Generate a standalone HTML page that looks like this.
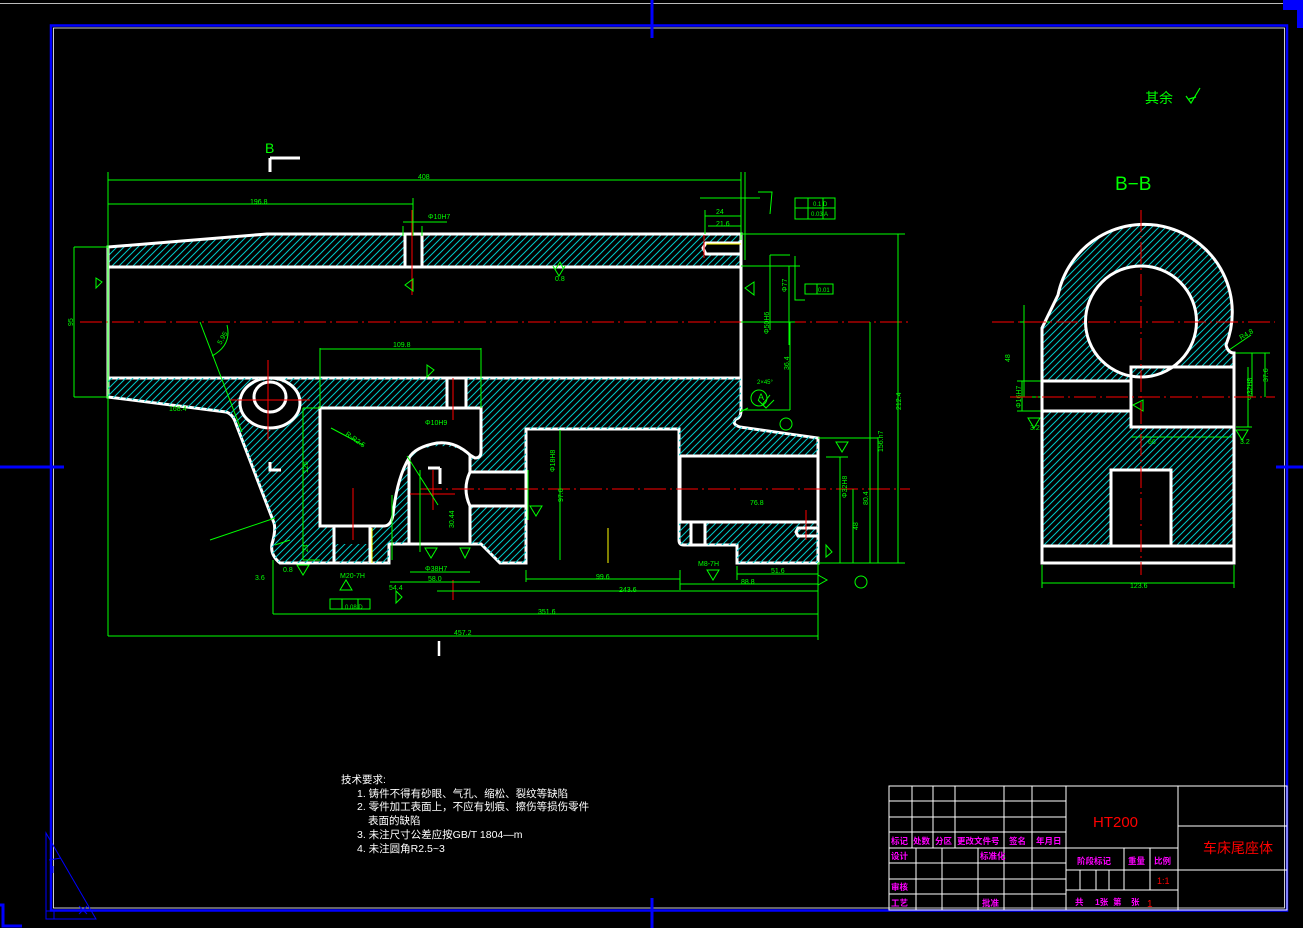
<!DOCTYPE html>
<html><head><meta charset="utf-8"><style>
html,body{margin:0;padding:0;background:#000;width:1303px;height:928px;overflow:hidden}
svg{display:block}
.g{fill:#00ff00;font-family:"Liberation Sans",sans-serif;font-size:7px}
.d{stroke:#00ff00;stroke-width:1;fill:none}
.w{stroke:#fff;stroke-width:3;fill:none}
.r{stroke:#ff0000;stroke-width:1;stroke-dasharray:22 4 2 4;fill:none}
.t{stroke:#fff;stroke-width:1;fill:none}
.m{fill:#ff00ff;font-family:"Liberation Sans","Noto Sans CJK SC",sans-serif;font-size:8.5px;font-weight:bold}
</style></head><body>
<svg width="1303" height="928" viewBox="0 0 1303 928" xmlns="http://www.w3.org/2000/svg">
<defs>
<pattern id="h" width="7" height="7" patternUnits="userSpaceOnUse">
<path d="M-1,8 L8,-1 M-1,1 L1,-1 M6,8 L8,6" stroke="#00c8c8" stroke-width="1"/>
</pattern>
</defs>
<line x1="0" y1="3.5" x2="1290" y2="3.5" stroke="#bbb" stroke-width="1"/>
<path d="M1283,0 H1303 V28 H1297 V10 H1283 Z" fill="#0000ff"/>
<rect x="51" y="25.5" width="1236" height="885" fill="none" stroke="#0000ff" stroke-width="2.5"/>
<rect x="53.5" y="28" width="1231" height="880" fill="none" stroke="#fff" stroke-width="0.8"/>
<line x1="652" y1="0" x2="652" y2="38" stroke="#0000ff" stroke-width="3"/>
<line x1="652" y1="898" x2="652" y2="928" stroke="#0000ff" stroke-width="3"/>
<line x1="0" y1="467" x2="64" y2="467" stroke="#0000ff" stroke-width="3"/>
<line x1="1276" y1="467" x2="1303" y2="467" stroke="#0000ff" stroke-width="3"/>
<path d="M0,905 H3 V926 H22" stroke="#0000ff" stroke-width="3" fill="none"/>
<path d="M46,833 V919 H96 Z M46,911 H54 V919" stroke="#0000ff" stroke-width="1" fill="none"/>
<path d="M49,860 L61,858 M53,866 V873 M79,906 L87,914 M87,906 L79,914" stroke="#0000ff" stroke-width="1" fill="none"/>

<path fill="url(#h)" fill-rule="evenodd" d="M108,247 L267,234 H741 V267 H108 Z M405,234 H422 V267 H405 Z M703,243 H741 V254 H703 Z"/>
<path class="w" d="M108,247 L267,234 H741 V410 Q741,418 736,419 Q731,424 740,427 L818,438 V563 H737 V545 H684 Q679,545 679,540 V429 H526 V563 H500 L481,544 H389 V563 H280 Q270,555 272,544 Q276,530 274,523 L236,424 Q233,414 226,412 L108,397 Z"/>
<path class="w" d="M108,267 H741 M108,378 H741 M405,234 V267 M422,234 V267 M741,243 H706 L703,248 L706,254 H741"/>
<path fill="url(#h)" fill-rule="evenodd" d="M108,378 H741 V410 Q741,418 736,419 Q731,424 740,427 L818,438 V456 H680 V522 H818 V563 H737 V545 H684 Q679,545 679,540 V429 H526 V563 H500 L481,544 H389 V563 H280 Q270,555 272,544 Q276,530 274,523 L236,424 Q233,414 226,412 L108,397 Z
M270,380 A30,25 0 1,0 270.1,380 Z
M320,408 H481 V452 Q481,458 475,458 L470,455 Q455,441 437,443 Q415,447 409,458 V458 Q397,478 393,515 Q391,526 384,526 H320 Z
M409,544 V460 Q420,446 440,446 Q462,446 470,458 V472 H526 V506 H470 V544 Z
M447,378 H466 V408 H447 Z
M334,526 H370 V544 H334 Z
M691,522 H705 V545 H691 Z"/>
<ellipse cx="270" cy="403" rx="30" ry="25" class="w" stroke-width="2.5"/>
<ellipse cx="270" cy="397" rx="16" ry="15" class="w" stroke-width="2.5"/>
<path class="w" d="M320,408 H481 V452 Q481,458 475,458 L470,455 Q455,441 437,443 Q415,447 409,458 Q397,478 393,515 Q391,526 384,526 H320 Z"/>
<path class="w" d="M409,544 V458 M470,455 V472 H526 M470,506 H526 M470,506 V544 M470,472 Q462,489 470,506"/>
<path class="w" d="M447,378 V408 M466,378 V408 M334,526 V563 M370,526 V563 M680,456 H818 M680,456 V522 H818 M691,522 V545 M705,522 V545 M818,528 H798 L796,532 L798,536 H818"/>
<path d="M372,528 V563 M608,528 V563" stroke="#ffff00" stroke-width="1"/>
<path d="M706,244 H741" stroke="#ffff00" stroke-width="1"/>
<path class="w" d="M270,158 H300 M270,158 V172 M428,468 H440 M440,468 V484 M270,462 V470 H281" stroke-width="2.5"/>
<path d="M439,641 V656" stroke="#fff" stroke-width="2.5"/>
<text x="265" y="153" fill="#00ff00" font-family="Liberation Sans,sans-serif" font-size="14">B</text>

<line class="r" x1="80" y1="322" x2="910" y2="322"/>
<line class="r" x1="420" y1="489" x2="910" y2="489"/>
<path d="M268,360 V440 M230,400 H310 M353,488 V540 M433,470 V510 M410,494 H455 M453,580 V600 M453,378 V420 M806,510 V540 M704,235 V258 M412,210 V295" stroke="#ff0000" stroke-width="1"/>

<g class="d">
<path d="M108,172 V636 M741,172 V240 M108,180 H741 M108,204 H413 M413,198 V236 M403,226 V236 M422,226 V236 M403,222 H447"/>
<path d="M705,210 V234 M741,210 V234 M705,216 H741 M708,226 H741"/>
<path d="M741,234 H905 M741,266 H800 M789,266 V345 M741,322 H795 M741,410 H790 M790,322 V410 M770,255 V330 M770,255 H790 M795,256 V300 H805"/>
<path d="M898,234 V563 M870,322 V563 M853,489 V563 M840,457 V563 M826,457 H848 M818,563 H905 M818,438 H878 M878,438 V563"/>
<path d="M273,560 V614 M818,563 V640 M526,570 V582 M680,570 V590 M737,566 V580 M273,614 H818 M437,591 H818 M526,579 H680 M680,584 H818 M737,574 H818 M390,582 H480 M410,572 H470 M108,636 H818"/>
<path d="M320,348 V408 M481,348 V408 M320,349 H481 M303,408 V560 M303,408 H320 M303,560 H320"/>
<path d="M74,247 V397 M74,247 H108 M74,397 H108"/>
<path d="M200,322 L242,432 M227,325 Q232,345 212,356"/>
<path d="M331,428 L363,445 M407,456 L438,505 M392,495 V560 M420,470 V552 M528,470 V520 M560,430 V560"/>
<path d="M210,540 L275,518 M275,545 L290,540"/>
<path d="M1024,322 V397 M1010,397 H1048 M1018,322 H1050 M1017,381 H1042 M1017,411 H1042 M1022,381 V411 M1252,353 V397 M1235,353 H1270 M1265,353 V397 M1248,367 V427 M1236,427 H1252 M1131,437 H1232 M1042,565 V588 M1234,565 V588 M1042,583 H1234 M1024,305 V340 M1229,350 L1251,335"/>
<path d="M700,198 H760 M745,172 V260 M758,192 H772 L770,214 M795,198 H835 V219 H795 Z M808,198 V219 M795,208 H835 M823,198 V219"/>
<path d="M805,284 H833 V294 H805 Z M817,284 V294"/>
<path d="M330,599 H370 V609 H330 Z M342,599 V609 M358,599 V609"/>
</g>
<g class="d">
<path d="M553,266 L559,276 L565,266 M555,270 L560,262 L563,268"/>
<path d="M745,288 L754,282 L754,295 Z M740,412 L748,408 M758,400 L766,408 L774,400 M762,405 L770,395"/>
<path d="M405,285 L413,279 L413,291 Z M297,565 L303,575 L309,565 Z M340,590 L346,580 L352,590 Z M425,548 L431,558 L437,548 Z M460,548 L465,558 L470,548 Z M402,597 L396,591 L396,603 Z M530,506 L536,516 L542,506 Z M707,570 L713,580 L719,570 Z M818,575 L827,580 L818,585 Z M836,442 L842,452 L848,442 Z M826,545 L832,552 L826,557 Z M96,278 L102,282 L96,288 Z M1028,418 L1034,428 L1040,418 Z M1236,430 L1242,440 L1248,430 Z M1133,405 L1143,400 L1143,411 Z M427,365 L434,370 L427,377 Z"/>
<circle cx="759" cy="398" r="8"/><circle cx="786" cy="424" r="6"/><circle cx="861" cy="582" r="6"/>
</g>
<g class="g">
<text x="418" y="179">408</text><text x="250" y="204">196.8</text><text x="428" y="219">Φ10H7</text>
<text x="716" y="214">24</text><text x="716" y="226">21.6</text>
<text x="813" y="206" font-size="6">0.1 D</text><text x="811" y="216" font-size="6">0.03 A</text>
<text x="818" y="292" font-size="6">0.01</text>
<text x="393" y="347">109.8</text><text x="555" y="281">0.8</text>
<text x="283" y="572">0.8</text><text x="255" y="580">3.6</text><text x="340" y="578">M20-7H</text>
<text x="425" y="571">Φ38H7</text><text x="428" y="581">58.0</text><text x="389" y="590">54.4</text>
<text x="596" y="579">99.6</text><text x="619" y="592">243.6</text><text x="538" y="614">351.6</text><text x="454" y="635">457.2</text>
<text x="750" y="505">76.8</text><text x="771" y="573">51.6</text><text x="741" y="584">88.8</text><text x="698" y="566">M8-7H</text>
<text x="425" y="425">Φ10H9</text><text x="345" y="609" font-size="6">0.08 D</text>
<text x="758" y="400" font-size="9">A</text><text x="169" y="411">168.4</text>
<text x="757" y="384" font-size="6">2×45°</text>
</g>
<g class="g" font-size="7">
<text transform="translate(73,326) rotate(-90)">95</text>
<text transform="translate(769,334) rotate(-90)">Φ50H6</text>
<text transform="translate(787,292) rotate(-90)">Φ77</text>
<text transform="translate(789,370) rotate(-90)">36.4</text>
<text transform="translate(901,410) rotate(-90)">212.4</text>
<text transform="translate(883,452) rotate(-90)">156.h7</text>
<text transform="translate(868,505) rotate(-90)">80.4</text>
<text transform="translate(858,530) rotate(-90)">48</text>
<text transform="translate(847,498) rotate(-90)">Φ32H8</text>
<text transform="translate(308,473) rotate(-90)">126</text>
<text transform="translate(308,552) rotate(-90)">24</text>
<text transform="translate(563,502) rotate(-90)">97.6</text>
<text transform="translate(454,528) rotate(-90)">30.44</text>
<text transform="translate(555,472) rotate(-90)">Φ18H8</text>
<text transform="translate(221,345) rotate(-60)">5.95</text>
<text transform="translate(345,435) rotate(35)">R-R2.5</text>
<text transform="translate(1010,362) rotate(-90)">48</text>
<text transform="translate(1021,408) rotate(-90)">Φ16H7</text>
<text transform="translate(1252,400) rotate(-90)">Φ32H8</text>
<text transform="translate(1268,382) rotate(-90)">37.6</text>
<text transform="translate(1241,340) rotate(-30)">R4.8</text>
</g>
<text x="1130" y="588" class="g">123.6</text><text x="1148" y="444" class="g">66</text>
<text x="1030" y="430" class="g">3.2</text><text x="1240" y="444" class="g">3.2</text>

<path fill="url(#h)" fill-rule="evenodd" d="M1042,546 V328 L1058,295 A88,88 0 1,1 1226,345 Q1228,353 1234,353 V546 Z M1141,266 A55.5,55.5 0 1,0 1141.1,266 Z M1042,381 H1131 V411 H1042 Z M1131,367 H1234 V427 H1131 Z M1111,470 H1171 V546 H1111 Z"/>
<path class="w" d="M1042,563 V328 L1058,295 A88,88 0 1,1 1226,345 Q1228,353 1234,353 V563 Z M1042,546 H1234 M1042,381 H1131 V411 H1042 M1131,411 V427 H1234 M1131,381 V367 H1234 M1111,546 V470 H1171 V546" stroke-width="2.5"/>
<circle cx="1141" cy="321.5" r="55.5" class="w" stroke-width="2.5"/>
<line class="r" x1="992" y1="322" x2="1275" y2="322"/>
<line class="r" x1="1010" y1="397" x2="1275" y2="397"/>
<line class="r" x1="1141" y1="210" x2="1141" y2="575"/>
<text x="1115" y="190" fill="#00ff00" font-family="Liberation Sans,sans-serif" font-size="19">B−B</text>

<text x="1145" y="103" fill="#00ff00" font-family="Liberation Sans,'Noto Sans CJK SC',sans-serif" font-size="14">其余</text>
<path d="M1186,96 L1191,103 L1200,88 M1189,99 L1196,97" stroke="#00ff00" fill="none" stroke-width="1.2"/>

<g fill="#fff" font-family="Liberation Sans,'Noto Sans CJK SC',sans-serif" font-size="10.5">
<text x="341" y="783">技术要求:</text>
<text x="357" y="797">1. 铸件不得有砂眼、气孔、缩松、裂纹等缺陷</text>
<text x="357" y="810">2. 零件加工表面上，不应有划痕、擦伤等损伤零件</text>
<text x="368" y="824">表面的缺陷</text>
<text x="357" y="838">3. 未注尺寸公差应按GB/T 1804—m</text>
<text x="357" y="852">4. 未注圆角R2.5~3</text>
</g>

<g class="t">
<rect x="889" y="786" width="398" height="124"/>
<path d="M889,801 H1066 M889,817 H1066 M889,832 H1066 M889,848 H1066 M889,863 H1066 M889,879 H1066 M889,894 H1066"/>
<path d="M912,786 V848 M933,786 V848 M955,786 V848 M1004,786 V910 M1032,786 V910 M1066,786 V910"/>
<path d="M916,848 V910 M942,848 V910 M978,848 V910"/>
<path d="M1178,786 V910 M1066,848 H1178 M1066,870 H1287 M1066,890 H1178 M1178,826 H1287"/>
<path d="M1124,848 V890 M1150,848 V890 M1080,870 V890 M1096,870 V890 M1109,870 V890"/>
</g>
<g class="m">
<text x="891" y="844">标记</text><text x="913" y="844">处数</text><text x="935" y="844">分区</text><text x="957" y="844">更改文件号</text><text x="1009" y="844">签名</text><text x="1036" y="844">年月日</text>
<text x="891" y="859">设计</text><text x="980" y="859">标准化</text>
<text x="891" y="890">审核</text><text x="891" y="906">工艺</text><text x="982" y="906">批准</text>
<text x="1077" y="864">阶段标记</text><text x="1128" y="864">重量</text><text x="1154" y="864">比例</text>
<text x="1075" y="905">共</text><text x="1095" y="905">1张</text><text x="1113" y="905">第</text><text x="1131" y="905">张</text>
</g>
<text x="1093" y="827" fill="#ff0000" font-family="Liberation Sans,sans-serif" font-size="15">HT200</text>
<text x="1203" y="853" fill="#ff0000" font-family="Liberation Sans,'Noto Sans CJK SC',sans-serif" font-size="14">车床尾座体</text>
<text x="1157" y="884" fill="#ff0000" font-family="Liberation Sans,sans-serif" font-size="9">1:1</text>
<text x="1147" y="907" fill="#ff0000" font-family="Liberation Sans,sans-serif" font-size="10">1</text>
</svg>
</body></html>
